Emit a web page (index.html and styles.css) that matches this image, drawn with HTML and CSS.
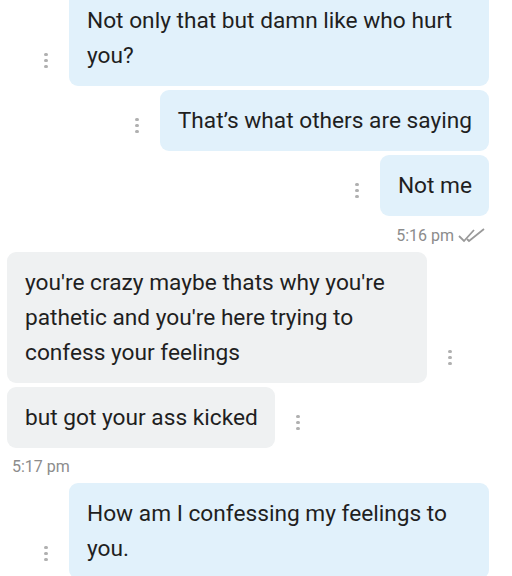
FILE: index.html
```html
<!DOCTYPE html>
<html lang="en">
<head>
    <meta charset="UTF-8">
    <meta name="viewport" content="width=device-width, initial-scale=1.0">
    <title>Chat</title>
    <link rel="stylesheet" href="styles.css">
</head>
<body>

    <div class="chat">
        <div class="row sent first">
            <span class="dots"><i></i><i></i><i></i></span>
            <div class="bubble">Not only that but damn like who hurt you?</div>
        </div>
        <div class="row sent">
            <span class="dots"><i></i><i></i><i></i></span>
            <div class="bubble">That’s what others are saying</div>
        </div>
        <div class="row sent">
            <span class="dots"><i></i><i></i><i></i></span>
            <div class="bubble">Not me</div>
        </div>
        <div class="time time-sent">
            5:16 pm
            <svg width="28" height="16" viewBox="0 0 28 16">
                <path d="M1 8 L6 13 L16 2" fill="none" stroke="#9a9a9a" stroke-width="1.8"/>
                <path d="M9 11 L11 13 L26 1" fill="none" stroke="#9a9a9a" stroke-width="1.8"/>
            </svg>
        </div>

        <div class="row received">
            <div class="bubble">you're crazy maybe thats why you're pathetic and you're here trying to confess your feelings</div>
            <span class="dots"><i></i><i></i><i></i></span>
        </div>
        <div class="row received">
            <div class="bubble">but got your ass kicked</div>
            <span class="dots"><i></i><i></i><i></i></span>
        </div>
        <div class="time time-received">5:17 pm</div>

        <div class="row sent">
            <span class="dots"><i></i><i></i><i></i></span>
            <div class="bubble">How am I confessing my feelings to you.</div>
        </div>
    </div>

</body>
</html>
```

FILE: styles.css
```css
body {
    margin: 0;
    background: #ffffff;
    font-family: Roboto, "Noto Sans", Arial, sans-serif;
    color: #1f1f1f;
    overflow: hidden;
}
.chat {
    display: flex;
    flex-direction: column;
    gap: 4px;
    padding: 0 23px 0 7px;
}
.row {
    display: flex;
    align-items: flex-end;
    gap: 21px;
}
.row.first {
    margin-top: -10px;
}
.sent {
    justify-content: flex-end;
}
.received {
    justify-content: flex-start;
}
.bubble {
    max-width: 385px;
    padding: 13px 17px 13px 18px;
    font-size: 22.7px;
    line-height: 35px;
    border-radius: 9px;
}
.sent .bubble {
    background-color: #e1f1fb;
}
.received .bubble {
    background-color: #eff1f2;
}
.dots {
    display: flex;
    flex-direction: column;
    gap: 3px;
    margin-bottom: 18px;
}
.dots i {
    display: block;
    width: 4px;
    height: 3px;
    border-radius: 2px;
    background-color: #b0b0b0;
}
.time {
    font-size: 16px;
    line-height: 19px;
    color: #8c8c8c;
    display: flex;
    align-items: center;
    gap: 4px;
}
.time-sent {
    justify-content: flex-end;
    padding: 6px 3px 3px 0;
}
.time-received {
    padding: 5px 0 3px 5px;
}
```
